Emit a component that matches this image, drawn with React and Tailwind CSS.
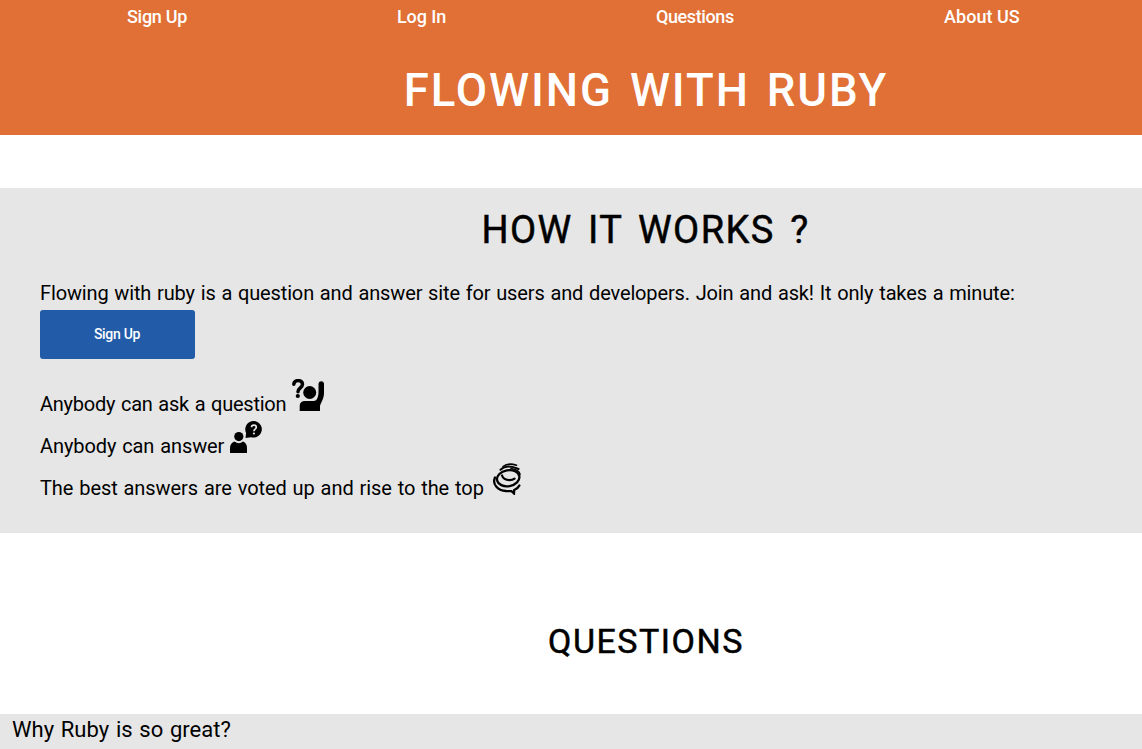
const navItems = [
  { label: "Sign Up", style: "w-[60px] tracking-[-0.3px]" },
  { label: "Log In", style: "w-[49px] tracking-[-0.1px]" },
  { label: "Questions", style: "w-[78px] tracking-[-0.4px]" },
  { label: "About US", style: "w-[76px] tracking-[0.05px]" },
];

function RaisedHandIcon() {
  return (
    <svg className="ml-[6px] h-8 w-8" viewBox="0 0 32 32" fill="currentColor">
      <path d="M1.800 5.200C2 .300 10.500.300 10.500 5.200c0 3.500-4.500 3.800-4.500 7.500" fill="none" stroke="currentColor" strokeWidth="3.500" strokeLinecap="round" />
      <circle cx="5.800" cy="17" r="2.100" />
      <circle cx="17.700" cy="13.500" r="6.500" />
      <path d="M7.700 32v-5.500Q8 22 13 22h8.500c3.500 0 4.500-3.500 5-8V4.500a2.800 2.800 0 0 1 5.500 0V14c0 6-3 9-4 13v5Z" />
    </svg>
  );
}

function AnswerIcon() {
  return (
    <svg className="ml-[6px] h-8 w-8" viewBox="0 0 32 32" fill="currentColor">
      <circle cx="8.800" cy="15.600" r="4.600" />
      <path d="M4.500 20.500Q8.800 24 13 20.500 17 22 17 27v5H0v-5q0-5 4.500-6.500Z" />
      <path d="M15.500 17L16.100 12A8.300 8.300 0 1 1 21 16.200Z" />
      <path d="M21.500 6.300c0-3 4.800-3 4.800 0 0 2-2.400 1.700-2.400 4" fill="none" stroke="#e6e6e6" strokeWidth="1.700" />
      <circle cx="23.900" cy="12.500" r="1.100" fill="#e6e6e6" />
    </svg>
  );
}

function CoilIcon() {
  return (
    <svg className="ml-[8px] h-8 w-8" viewBox="0 0 32 32" fill="none" stroke="currentColor" strokeWidth="2.300" strokeLinecap="round">
      <path d="M11 3.500Q16-.500 24.500 2.200" strokeWidth="1.600" />
      <path d="M8.500 6.800Q15 .500 26.500 6" strokeWidth="2" />
      <path d="M19 5.500Q27.500 7 28 11.500" strokeWidth="1.600" />
      <ellipse cx="16.200" cy="15.200" rx="11.300" ry="8" transform="rotate(-10 16.200 15.200)" />
      <path d="M10 12.500Q11.500 17 17.500 17.200q3 0 5-1.500" />
      <path d="M3 14.500C0 21 5.500 27.500 14 28l5.500.200 2.500 2.300.200-3.500q3.800-1.500 5.200-4.500" />
    </svg>
  );
}

export default function App() {
  return (
    <div className="h-[749px] overflow-hidden bg-white font-['Roboto',sans-serif] text-black">
      <header className="h-[135px] bg-[#e07035] text-white">
        <nav className="flex h-[34px] gap-[210px] pl-[127px] text-[18px] leading-[34px] font-medium">
          {navItems.map(({ label, style }) => (
            <a key={label} className={`shrink-0 whitespace-nowrap ${style}`}>{label}</a>
          ))}
        </nav>
        <h1 className="pt-[30px] pl-[150px] text-center text-[45.5px] leading-[54px] font-medium tracking-[1.9px] [word-spacing:3.800px]">FLOWING WITH RUBY</h1>
      </header>
      <section className="mt-[53px] h-[345px] bg-[#e6e6e6] px-10 pt-[19px]">
        <h2 className="pl-[149px] text-center text-[38px] leading-[46px] font-normal tracking-[1.45px] [word-spacing:4.400px] [-webkit-text-stroke:0.5px_black]">HOW IT WORKS ?</h2>
        <p className="mt-[28px] text-[20px] leading-[24px] whitespace-nowrap tracking-[-0.14px] [word-spacing:1px]">Flowing with ruby is a question and answer site for users and developers. Join and ask! It only takes a minute:</p>
        <button className="mt-[5px] flex h-[49px] w-[155px] items-center justify-center rounded-[3px] bg-[#225ba8] pr-px text-[14px] font-medium tracking-[-0.3px] text-white">Sign Up</button>
        <ul className="mt-[20px] text-[20px] [word-spacing:1px]">
          <li className="flex h-[42px]"><span className="pt-[13px] leading-[24px] tracking-[-0.24px]">Anybody can ask a question</span><RaisedHandIcon /></li>
          <li className="flex h-[42px]"><span className="pt-[13px] leading-[24px] tracking-[-0.09px]">Anybody can answer</span><AnswerIcon /></li>
          <li className="flex h-[42px]"><span className="pt-[13px] leading-[24px] tracking-[-0.07px]">The best answers are voted up and rise to the top</span><CoilIcon /></li>
        </ul>
      </section>
      <section className="pt-[87px]">
        <h2 className="pl-[150px] text-center text-[34px] leading-[42px] font-normal tracking-[1.5px] [-webkit-text-stroke:0.5px_black]">QUESTIONS</h2>
        <article className="mt-[52px] h-[35px] bg-[#e6e6e6] pl-[12px] text-[22px] leading-[32px] [word-spacing:1.300px]">Why Ruby is so great?</article>
      </section>
    </div>
  );
}
